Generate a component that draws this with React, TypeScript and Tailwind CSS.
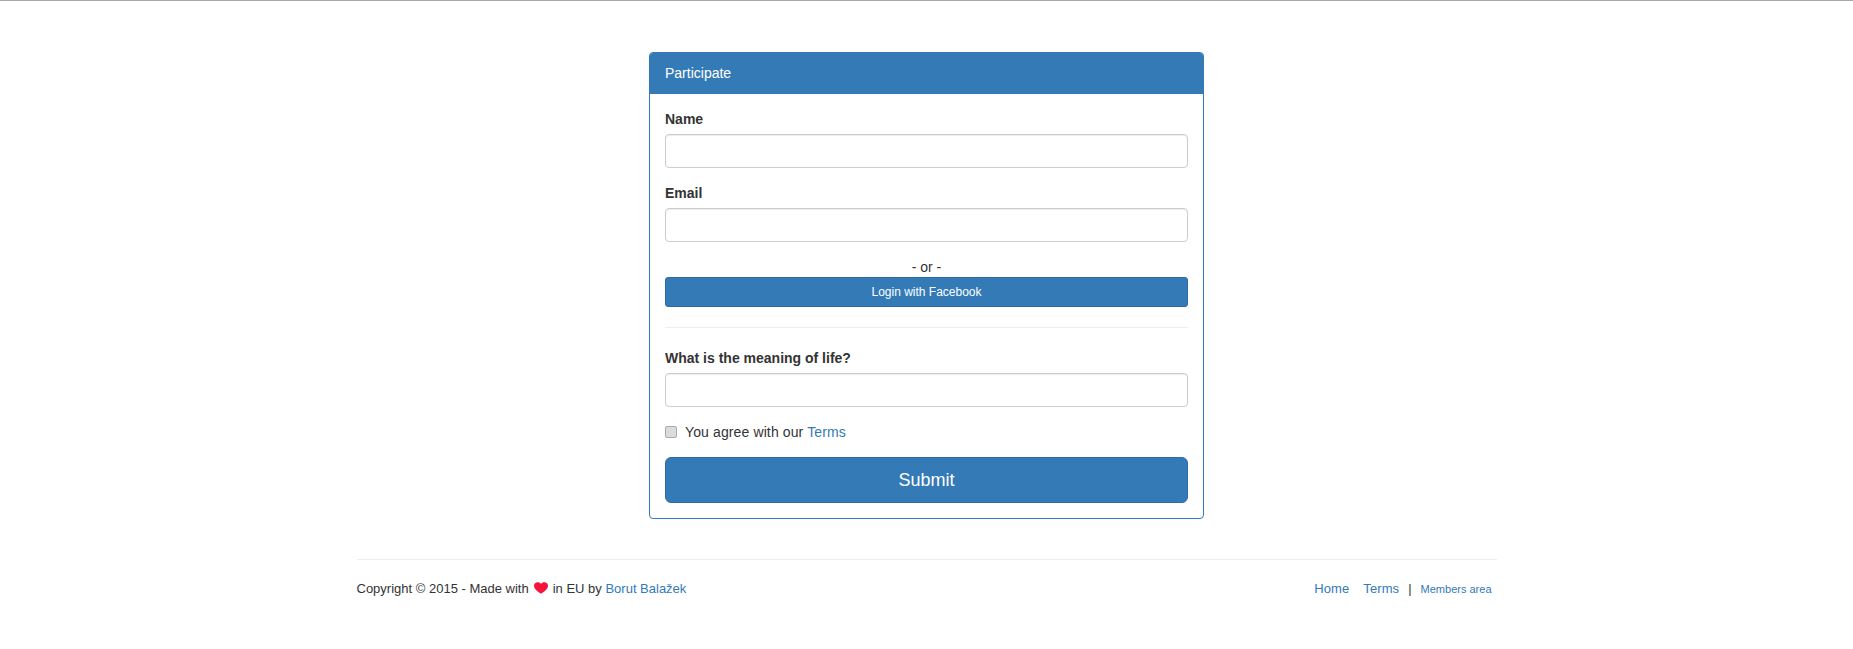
function Field({ label }: { label: string }) {
  return (
    <div className="mb-[15px]">
      <label className="block mb-[5px] font-bold leading-5">{label}</label>
      <input
        type="text"
        className="block w-full h-[34px] px-3 py-1.5 bg-white border border-[#ccc] rounded outline-none shadow-[inset_0_1px_1px_rgba(0,0,0,0.075)]"
      />
    </div>
  );
}

function Heart() {
  return (
    <svg viewBox="0 0 24 20" className="inline-block w-[14px] h-[12px] ml-[5px] mr-[5px] align-[-1px]" fill="#f4143c">
      <path d="M12 20C9 17.5 0 12.5 0 6 0 2.6 2.8 0 6.3 0 8.6 0 10.8 1 12 2.8 13.2 1 15.4 0 17.7 0 21.2 0 24 2.6 24 6 24 12.5 15 17.5 12 20Z" />
    </svg>
  );
}

export default function App() {
  return (
    <div className="min-h-[649px] bg-white border-t border-[#aaa] font-['Liberation_Sans',Arial,sans-serif] text-sm leading-5 text-[#333]">
      <div className="w-[1170px] mx-auto px-[15px] pt-[51px]">
        <div className="w-[555px] mx-auto border border-[#337ab7] rounded overflow-hidden">
          <div className="bg-[#337ab7] text-white pl-[16px] pr-[15px] py-[11px] leading-5 -mx-px -mt-px">Participate</div>
          <form className="p-[15px]">
            <Field label="Name" />
            <Field label="Email" />
            <div className="text-center">- or -</div>
            <div className="h-[30px] flex items-center justify-center bg-[#337ab7] border border-[#2e6da4] rounded-[3px] text-white text-xs">
              Login with Facebook
            </div>
            <hr className="mt-5 mb-5 border-t border-[#eee]" />
            <Field label="What is the meaning of life?" />
            <div className="flex items-center mt-[14px] mb-[15px] h-5">
              <input
                type="checkbox"
                className="appearance-none w-[12px] h-[12px] mr-[8px] bg-[#dcdcdc] border border-[#a9a9a9] rounded-[2px]"
              />
              <span className="tracking-[0.12px]">
                You agree with our <a className="text-[#337ab7]">Terms</a>
              </span>
            </div>
            <div className="h-[46px] flex items-center justify-center bg-[#337ab7] border border-[#2e6da4] rounded-md text-white text-lg">
              Submit
            </div>
          </form>
        </div>
        <hr className="mt-10 border-t border-[#eee]" />
        <div className="flex justify-between items-center mt-[19px] pr-[5px] text-[13px]">
          <div>
            Copyright © 2015 - Made with
            <Heart />
            in EU by <a className="text-[#337ab7]">Borut Balažek</a>
          </div>
          <div className="flex items-center">
            <a className="text-[#337ab7] tracking-[0.1px]">Home</a>
            <a className="text-[#337ab7] ml-[14px] tracking-[0.1px]">Terms</a>
            <span className="mx-[9px]">|</span>
            <a className="text-[#337ab7] text-[11px]">Members area</a>
          </div>
        </div>
      </div>
    </div>
  );
}
